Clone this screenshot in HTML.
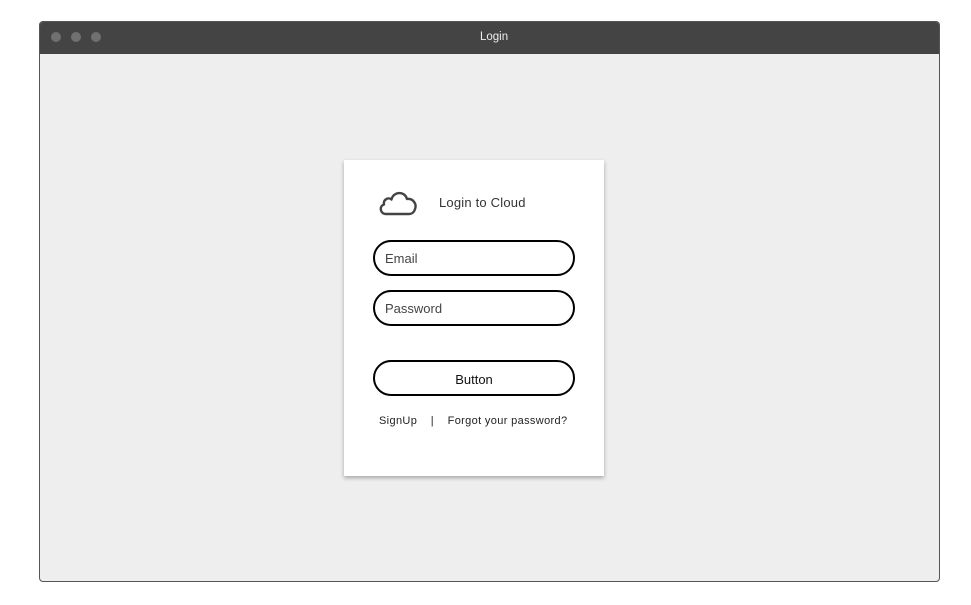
<!DOCTYPE html>
<html><head><style>
*{margin:0;padding:0;box-sizing:border-box}
body{width:971px;height:605px;background:#fff;position:relative;font-family:"Liberation Sans",sans-serif;overflow:hidden}
.win{position:absolute;left:39px;top:21px;width:901px;height:561px;border:1px solid #555;border-radius:4px;background:#eee;overflow:hidden}
.bar{height:32px;background:#444;position:relative}
.dot{position:absolute;top:10px;width:10px;height:10px;border-radius:50%;background:#707070}
.title{position:absolute;left:440px;top:9px;color:#eee;font-size:11.5px}
.card{position:absolute;left:344px;top:160px;width:260px;height:316px;background:#fff;box-shadow:0 2px 4px rgba(0,0,0,.3)}
.h{position:absolute;left:95px;top:35px;font-size:13px;color:#333;letter-spacing:.2px}
.inp{position:absolute;left:29px;width:202px;height:36px;border:2px solid #000;border-radius:18px;font-size:13px;color:#444;padding:9px 0 0 10px}
.btn{text-align:center;padding-left:0;color:#111;padding-top:10px}
.links{position:absolute;top:255px;left:35px;font-size:11px;color:#222;white-space:pre;letter-spacing:.35px}
</style></head><body>
<div class="win">
<div class="bar"><div class="dot" style="left:11px"></div><div class="dot" style="left:31px"></div><div class="dot" style="left:51px"></div><div class="title">Login</div></div>
</div>
<div class="card">
<svg style="position:absolute;left:34px;top:29px" width="40" height="28" viewBox="0 0 40 28"><path d="M8 25 C2 25 1 17 6 15.5 C5 10 11 8 13.5 10.5 C15.5 2 27 2 29 10 C35 9 39 15 37 20 C36 24 33 25 31 25 Z" fill="none" stroke="#444" stroke-width="2.4" stroke-linejoin="round"/></svg>
<div class="h">Login to Cloud</div>
<div class="inp" style="top:80px">Email</div>
<div class="inp" style="top:130px">Password</div>
<div class="inp btn" style="top:200px">Button</div>
<div class="links">SignUp    |    Forgot your password?</div>
</div>
</body></html>
